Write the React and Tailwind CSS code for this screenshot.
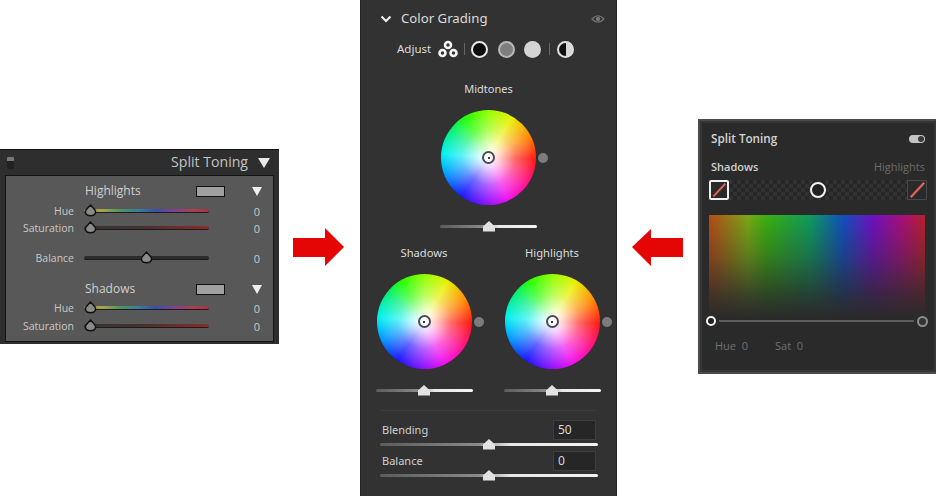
import React from "react";

const WHEEL =
  "bg-[radial-gradient(circle,rgba(255,255,255,1)_0%,rgba(255,255,255,0.8)_16%,rgba(255,255,255,0.35)_40%,rgba(255,255,255,0)_70%),conic-gradient(from_0deg,#90ff00,#e8f000_30deg,#ff9000_60deg,#ff1810_92deg,#ff10a0_130deg,#f010f0_155deg,#8010ff_185deg,#1818ff_215deg,#00a0ff_250deg,#00f0f0_275deg,#00f080_305deg,#20ff00_330deg,#90ff00)]";

function Arrow({ dir }) {
  const pts = dir === "right" ? "1,10 33,10 33,0 52,19 33,38 33,29 1,29" : "0,18 19,0 19,9 51,9 51,28 19,28 19,37";
  return (
    <svg width="52" height="38" viewBox="0 0 52 38" className="block shrink-0">
      <polygon points={pts} fill="#e60505" />
    </svg>
  );
}

function LRThumb({ className }) {
  return (
    <svg width="13" height="13" viewBox="0 0 13 13" className={className}>
      <path d="M6.5 1 L11 6 Q12.5 9 10 11 Q6.5 12.5 3 11 Q0.5 9 2 6 Z" fill="#8a8a8a" stroke="#111" strokeWidth="1.4" />
    </svg>
  );
}

function LRRow({ label, track, pos = "left-0", value = "0" }) {
  return (
    <div className="flex items-center h-4">
      <div className="w-[68px] text-right text-[10.5px] text-[#c8c8c8] leading-none">{label}</div>
      <div className="relative ml-[10px] w-[125px] h-[4px]">
        <div className={`h-full rounded-full border-b border-[#1c1c1c] ${track}`} />
        <LRThumb className={`absolute -top-[5px] ${pos}`} />
      </div>
      <div className="ml-[41px] w-[14px] text-center text-[11px] text-[#c8c8c8] leading-none">{value}</div>
    </div>
  );
}

function LRHead({ label, className }) {
  return (
    <div className={`flex items-center h-4 ${className}`}>
      <div className="ml-[79px] w-[111px] text-[12px] text-[#cfcfcf] leading-none">{label}</div>
      <div className="w-[29px] h-[11px] bg-[#a0a0a0] border border-[#111]" />
      <div className="ml-[27px] w-0 h-0 border-l-[5px] border-r-[5px] border-t-[9px] border-l-transparent border-r-transparent border-t-[#f0f0f0]" />
    </div>
  );
}

function LeftPanel() {
  const rainbow = "bg-[linear-gradient(to_right,#8f8a50,#aaa448,#4f9560,#38809c,#3a50a8,#80408f,#a84058,#b03040)]";
  const sat = "bg-[linear-gradient(to_right,#333333,#4a3030,#8f2a2a)]";
  return (
    <div className="w-[279px] h-[195px] mt-[149px] shrink-0 bg-[#2e2e2e] border-t border-[#111] flex flex-col font-['Open_Sans',sans-serif]">
      <div className="h-[25px] flex items-center pl-[7px] pr-[9px]">
        <div className="w-[7px] h-[12px] rounded-[1px] bg-[#222] border-t-[4px] border-[#777]" />
        <div className="ml-auto text-[14.1px] text-[#c4c4c4] leading-none">Split Toning</div>
        <div className="ml-[10px] w-0 h-0 border-l-[6px] border-r-[6px] border-t-[10px] border-l-transparent border-r-transparent border-t-[#e8e8e8]" />
      </div>
      <div className="mx-[5px] w-[269px] h-[167px] bg-[#585858] border border-[#141414]">
        <LRHead label="Highlights" className="mt-[7px]" />
        <div className="mt-[4px]"><LRRow label="Hue" track={rainbow} /></div>
        <div className="mt-[1px]"><LRRow label="Saturation" track={sat} /></div>
        <div className="mt-[14px]">
          <LRRow label="Balance" track="bg-[#2c2c2c]" pos="left-[56px]" />
        </div>
        <LRHead label="Shadows" className="mt-[15px]" />
        <div className="mt-[3px]"><LRRow label="Hue" track={rainbow} /></div>
        <div className="mt-[2px]"><LRRow label="Saturation" track={sat} /></div>
      </div>
    </div>
  );
}

function HouseThumb() {
  return (
    <svg width="14" height="11" viewBox="0 0 14 11" className="absolute left-1/2 -translate-x-1/2 -top-[4px]">
      <path d="M7 0 L13 5.5 V10.5 H1 V5.5 Z" fill="#e2e2e2" />
    </svg>
  );
}

function GSlider({ width }) {
  return (
    <div className={`relative h-[3px] ${width} rounded-full bg-[linear-gradient(to_right,#5c5c5c,#8a8a8a_45%,#e8e8e8_60%,#f4f4f4)]`}>
      <HouseThumb />
    </div>
  );
}

function Wheel() {
  return (
    <div className="flex items-center justify-center">
      <div className="w-[12px]" />
      <div className={`w-[95px] h-[95px] rounded-full flex items-center justify-center ${WHEEL}`}>
        <div className="w-[13px] h-[13px] rounded-full bg-white border-2 border-[#4a4a58] flex items-center justify-center">
          <div className="w-[2px] h-[2px] rounded-full bg-black" />
        </div>
      </div>
      <div className="ml-[2px] w-[10px] h-[10px] rounded-full bg-[#7c7c7c]" />
    </div>
  );
}

function WheelSlider() {
  return (
    <div className="mt-[20px] flex justify-center">
      <GSlider width="w-[97px]" />
    </div>
  );
}

function ParamRow({ label, value, className }) {
  return (
    <div className={`flex items-center justify-between pl-[21px] pr-[20px] h-[19px] ${className}`}>
      <span className="text-[11px] text-[#d0d0d0] leading-none">{label}</span>
      <div className="w-[43px] h-[20px] bg-[#262626] border border-[#3e3e3e] pl-[4px] flex items-center text-[12px] text-[#d8d8d8] leading-none">{value}</div>
    </div>
  );
}

function AdjustDot({ className, children }) {
  return <div className={`w-[17px] h-[17px] rounded-full flex items-center justify-center ${className}`}>{children}</div>;
}

function CenterPanel() {
  return (
    <div className="w-[257px] h-[496px] shrink-0 bg-[#323232] border-l border-r border-[#252525] flex flex-col font-['Noto_Sans',sans-serif]">
      <div className="h-[38px] flex items-center pl-[19px] pr-[11px]">
        <svg width="12" height="8" viewBox="0 0 12 8">
          <path d="M1.5 1.5 L6 6 L10.5 1.5" fill="none" stroke="#f0f0f0" strokeWidth="2" />
        </svg>
        <span className="ml-[9px] text-[13.2px] text-[#dcdcdc] leading-none">Color Grading</span>
        <svg width="14" height="10" viewBox="0 0 14 10" className="ml-auto">
          <path d="M1 5 Q7 -1.5 13 5 Q7 11.5 1 5 Z" fill="none" stroke="#777" strokeWidth="1.2" />
          <circle cx="7" cy="5" r="2.2" fill="#777" />
        </svg>
      </div>
      <div className="h-[22px] flex items-center pl-[36px]">
        <span className="text-[11.5px] text-[#dcdcdc] leading-none">Adjust</span>
        <svg width="20" height="18" viewBox="0 0 20 18" className="ml-[7px]">
          <circle cx="10" cy="5" r="3" fill="#333" stroke="#f6f6f6" strokeWidth="2.6" />
          <circle cx="4.5" cy="13" r="3" fill="#333" stroke="#f6f6f6" strokeWidth="2.6" />
          <circle cx="15.5" cy="13" r="3" fill="#333" stroke="#f6f6f6" strokeWidth="2.6" />
        </svg>
        <div className="ml-[6px] w-px h-[12px] bg-[#666]" />
        <AdjustDot className="ml-[6px] bg-[#0c0c0c] border-2 border-[#e8e8e8]" />
        <AdjustDot className="ml-[10px] bg-[#7e7e7e] border-2 border-[#b8b8b8]" />
        <AdjustDot className="ml-[9px] bg-[#d4d4d4]" />
        <div className="ml-[8px] w-px h-[12px] bg-[#666]" />
        <AdjustDot className="ml-[7px] border-2 border-[#e0e0e0] bg-[linear-gradient(to_right,#111_50%,#d8d8d8_50%)]" />
      </div>
      <div className="mt-[19px] h-[18px] flex items-center justify-center text-[11px] text-[#dcdcdc] leading-none">Midtones</div>
      <div className="mt-[13px]"><Wheel /></div>
      <WheelSlider />
      <div className="mt-[16px] -ml-px grid grid-cols-2 w-[256px]">
        <div>
          <div className="h-[18px] flex items-center justify-center text-[11.2px] text-[#dcdcdc] leading-none">Shadows</div>
          <div className="mt-[12px]"><Wheel /></div>
          <WheelSlider />
        </div>
        <div>
          <div className="h-[18px] flex items-center justify-center text-[11.2px] text-[#dcdcdc] leading-none">Highlights</div>
          <div className="mt-[12px]"><Wheel /></div>
          <WheelSlider />
        </div>
      </div>
      <div className="mt-[18px] mx-[19px] h-px bg-[#3c3c3c]" />
      <ParamRow label="Blending" value="50" className="mt-[9px]" />
      <div className="mt-[4px] pl-[19px]"><GSlider width="w-[218px]" /></div>
      <ParamRow label="Balance" value="0" className="mt-[5px]" />
      <div className="mt-[4px] pl-[19px]"><GSlider width="w-[218px]" /></div>
    </div>
  );
}

function Swatch({ className }) {
  return (
    <svg width="20" height="20" viewBox="0 0 20 20" className={className}>
      <line x1="3" y1="18" x2="18" y2="2" stroke="#e0625c" strokeWidth="2.6" />
    </svg>
  );
}

function RightPanel() {
  const checker =
    "bg-[conic-gradient(#323232_25%,#262626_0_50%,#323232_0_75%,#262626_0)] bg-[length:8px_8px]";
  return (
    <div className="w-[238px] h-[255px] mt-[119px] shrink-0 bg-[#2a2a2a] border-t-2 border-b-2 border-l-2 border-[#4a4a4a] shadow-[inset_0_0_0_2px_#363636] flex flex-col font-['Open_Sans',sans-serif]">
      <div className="mt-[9px] h-[18px] flex items-center justify-between pl-[11px] pr-[11px]">
        <span className="text-[11.7px] font-semibold text-[#d4d4d4] leading-none">Split Toning</span>
        <div className="w-[16px] h-[8px] rounded-full bg-[#c4c4c4] flex items-center justify-end pr-[1px]">
          <div className="w-[6px] h-[6px] rounded-full bg-[#3a3a3a]" />
        </div>
      </div>
      <div className="mt-[10px] h-4 flex items-center justify-between pl-[11px] pr-[11px]">
        <span className="text-[11px] font-semibold text-[#d0d0d0] leading-none">Shadows</span>
        <span className="text-[11px] text-[#6a6a6a] leading-none">Highlights</span>
      </div>
      <div className={`mt-[6px] mx-[9px] h-[20px] flex items-center justify-between ${checker}`}>
        <Swatch className="border-2 border-[#f0f0f0] rounded-[2px] bg-[#2a2a2a]" />
        <div className="w-[16px] h-[16px] rounded-full border-2 border-[#f4f4f4] bg-[#222]" />
        <Swatch className="border border-[#484848] bg-[#2a2a2a]" />
      </div>
      <div className="mt-[15px] ml-[9px] mr-[11px] h-[103px] bg-[linear-gradient(to_bottom,rgba(42,42,42,0)_0%,rgba(42,42,42,0.35)_40%,rgba(42,42,42,0.8)_78%,rgba(42,42,42,1)_100%),linear-gradient(to_right,#b84a18,#7aa815_18%,#38b010_27%,#0e9a60_47%,#1050c0_62%,#7010c0_76%,#a81078_90%,#b8202c)]" />
      <div className="-mt-[2px] h-[10px] ml-[6px] mr-[8px] flex items-center">
        <div className="w-[10px] h-[10px] rounded-full bg-[#222] border-2 border-[#f4f4f4]" />
        <div className="mx-[3px] flex-1 h-[2px] bg-[#5c5c5c]" />
        <div className="w-[11px] h-[11px] rounded-full bg-[#333] border-2 border-[#8c8c8c]" />
      </div>
      <div className="mt-[11px] h-4 flex items-center pl-[15px] text-[11px] text-[#707070] leading-none">
        <span className="w-[60px]">Hue&nbsp;&nbsp;0</span>
        <span>Sat&nbsp;&nbsp;0</span>
      </div>
    </div>
  );
}

export default function App() {
  return (
    <div className="w-[936px] h-[496px] bg-white flex items-start overflow-hidden">
      <LeftPanel />
      <div className="ml-[13px] mt-[228px]"><Arrow dir="right" /></div>
      <div className="ml-[16px]"><CenterPanel /></div>
      <div className="ml-[15px] mt-[229px]"><Arrow dir="left" /></div>
      <div className="ml-[14px]"><RightPanel /></div>
    </div>
  );
}
